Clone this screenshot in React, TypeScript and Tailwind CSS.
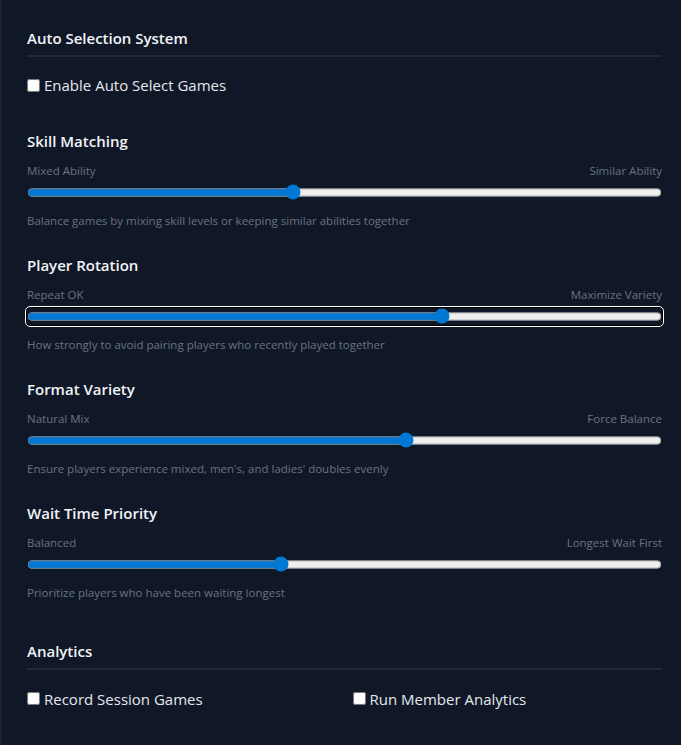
import { useState } from 'react';

interface SliderSetting {
  id: string;
  title: string;
  left: string;
  right: string;
  help: string;
  value: number;
  focused?: boolean;
}

const sliders: SliderSetting[] = [
  {
    id: 'skill',
    title: 'Skill Matching',
    left: 'Mixed Ability',
    right: 'Similar Ability',
    help: 'Balance games by mixing skill levels or keeping similar abilities together',
    value: 41.7,
  },
  {
    id: 'rotation',
    title: 'Player Rotation',
    left: 'Repeat OK',
    right: 'Maximize Variety',
    help: 'How strongly to avoid pairing players who recently played together',
    value: 65.7,
    focused: true,
  },
  {
    id: 'format',
    title: 'Format Variety',
    left: 'Natural Mix',
    right: 'Force Balance',
    help: "Ensure players experience mixed, men's, and ladies' doubles evenly",
    value: 60,
  },
  {
    id: 'wait',
    title: 'Wait Time Priority',
    left: 'Balanced',
    right: 'Longest Wait First',
    help: 'Prioritize players who have been waiting longest',
    value: 39.8,
  },
];

function Check({ label }: { label: string }) {
  const [on, setOn] = useState(false);
  return (
    <label className="flex items-center gap-1 cursor-pointer text-[15px] text-gray-200">
      <input
        type="checkbox"
        checked={on}
        onChange={() => setOn(!on)}
        className="m-0 w-[13px] h-[13px]"
      />
      <span>{label}</span>
    </label>
  );
}

function SliderBlock({ s }: { s: SliderSetting }) {
  const [value, setValue] = useState(s.value);
  return (
    <div className="h-[124px]">
      <h3 className="text-[15px] font-semibold text-gray-100 leading-5 pt-[5px]">{s.title}</h3>
      <div className="flex justify-between text-[11.5px] text-gray-500 leading-4 mt-[12px]">
        <span>{s.left}</span>
        <span>{s.right}</span>
      </div>
      <input
        type="range"
        min={0}
        max={100}
        step={0.1}
        value={value}
        onChange={(e) => setValue(Number(e.target.value))}
        className={`block w-full m-0 mt-[5px] h-[17px] accent-[#0078d4] ${
          s.focused ? 'rounded-[3px] outline outline-1 outline-offset-1 outline-white shadow-[0_0_0_1px_#000]' : ''
        }`}
      />
      <p className="text-[11.5px] text-gray-500 leading-4 mt-[12px]">{s.help}</p>
    </div>
  );
}

export default function App() {
  return (
    <div
      className="min-h-[745px] bg-gray-900 border-l-2 border-[#1b2333] pl-[25px] pr-[19px]"
      style={{ fontFamily: '"Open Sans", "Noto Sans", sans-serif' }}
    >
      <div className="pt-[28px]">
        <h2 className="text-[15px] font-semibold text-gray-100 leading-5">Auto Selection System</h2>
        <div className="h-[2px] bg-gray-800 mt-[7px]" />
        <div className="mt-[17px]">
          <Check label="Enable Auto Select Games" />
        </div>
      </div>

      <div className="mt-[29px]">
        {sliders.map((s) => (
          <SliderBlock key={s.id} s={s} />
        ))}
      </div>

      <div className="mt-[19px]">
        <h2 className="text-[15px] font-semibold text-gray-100 leading-5">Analytics</h2>
        <div className="h-[2px] bg-gray-800 mt-[7px]" />
        <div className="grid grid-cols-2 gap-4 mt-[18px]">
          <Check label="Record Session Games" />
          <Check label="Run Member Analytics" />
        </div>
      </div>
    </div>
  );
}
